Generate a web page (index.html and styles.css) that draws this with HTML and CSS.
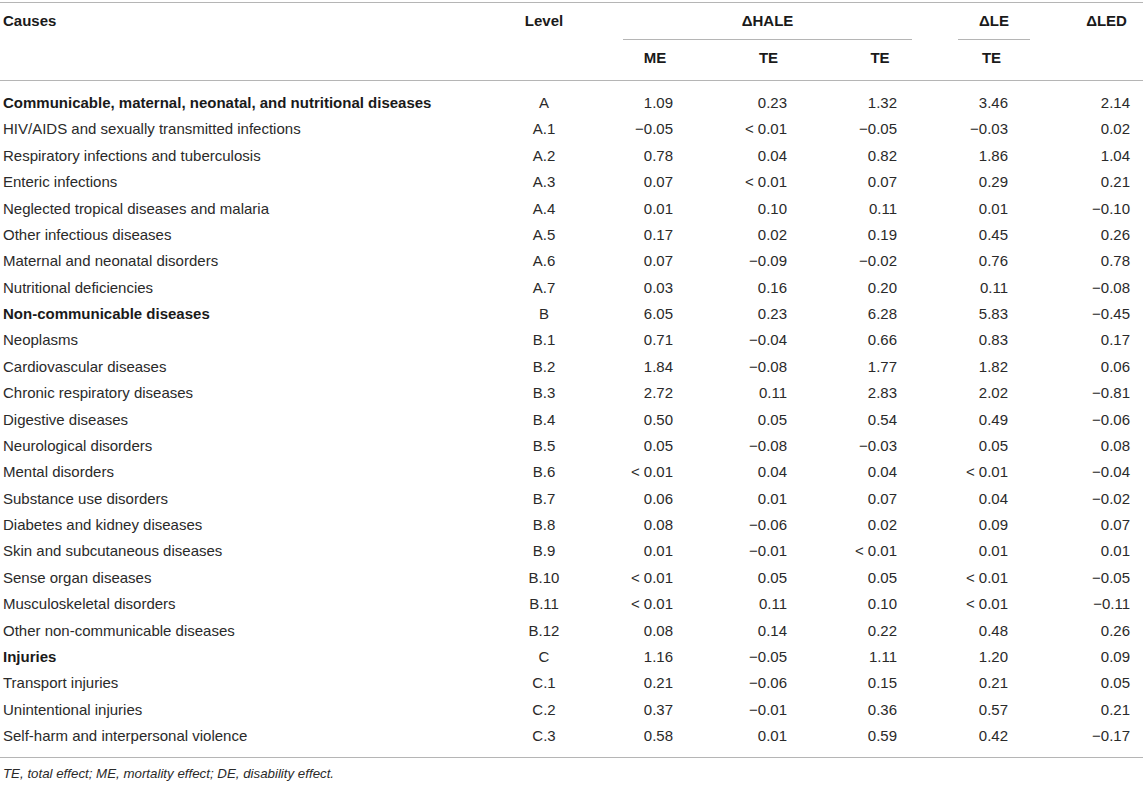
FILE: index.html
```html
<!DOCTYPE html>
<html lang="en">
<head>
<meta charset="utf-8">
<title>Table</title>
<link rel="stylesheet" href="styles.css">
</head>
<body>
<table class="data">
  <colgroup>
    <col class="c-cause"><col class="c-level"><col class="c-me"><col class="c-te2"><col class="c-te3"><col class="c-le"><col class="c-led">
  </colgroup>
  <thead>
    <tr class="h1">
      <th rowspan="2" class="th-cause">Causes</th>
      <th rowspan="2" class="th-level">Level</th>
      <th colspan="3" class="th-group"><div class="grp grp-hale">&Delta;HALE</div></th>
      <th class="th-group"><div class="grp grp-le">&Delta;LE</div></th>
      <th rowspan="2" class="th-led">&Delta;LED</th>
    </tr>
    <tr class="h2">
      <th class="th-sub">ME</th>
      <th class="th-sub">TE</th>
      <th class="th-sub">TE</th>
      <th class="th-sub">TE</th>
    </tr>
  </thead>
  <tbody>
    <tr class="cat"><td>Communicable, maternal, neonatal, and nutritional diseases</td><td>A</td><td>1.09</td><td>0.23</td><td>1.32</td><td>3.46</td><td>2.14</td></tr>
    <tr><td>HIV/AIDS and sexually transmitted infections</td><td>A.1</td><td>&minus;0.05</td><td>&lt; 0.01</td><td>&minus;0.05</td><td>&minus;0.03</td><td>0.02</td></tr>
    <tr><td>Respiratory infections and tuberculosis</td><td>A.2</td><td>0.78</td><td>0.04</td><td>0.82</td><td>1.86</td><td>1.04</td></tr>
    <tr><td>Enteric infections</td><td>A.3</td><td>0.07</td><td>&lt; 0.01</td><td>0.07</td><td>0.29</td><td>0.21</td></tr>
    <tr><td>Neglected tropical diseases and malaria</td><td>A.4</td><td>0.01</td><td>0.10</td><td>0.11</td><td>0.01</td><td>&minus;0.10</td></tr>
    <tr><td>Other infectious diseases</td><td>A.5</td><td>0.17</td><td>0.02</td><td>0.19</td><td>0.45</td><td>0.26</td></tr>
    <tr><td>Maternal and neonatal disorders</td><td>A.6</td><td>0.07</td><td>&minus;0.09</td><td>&minus;0.02</td><td>0.76</td><td>0.78</td></tr>
    <tr><td>Nutritional deficiencies</td><td>A.7</td><td>0.03</td><td>0.16</td><td>0.20</td><td>0.11</td><td>&minus;0.08</td></tr>
    <tr class="cat"><td>Non-communicable diseases</td><td>B</td><td>6.05</td><td>0.23</td><td>6.28</td><td>5.83</td><td>&minus;0.45</td></tr>
    <tr><td>Neoplasms</td><td>B.1</td><td>0.71</td><td>&minus;0.04</td><td>0.66</td><td>0.83</td><td>0.17</td></tr>
    <tr><td>Cardiovascular diseases</td><td>B.2</td><td>1.84</td><td>&minus;0.08</td><td>1.77</td><td>1.82</td><td>0.06</td></tr>
    <tr><td>Chronic respiratory diseases</td><td>B.3</td><td>2.72</td><td>0.11</td><td>2.83</td><td>2.02</td><td>&minus;0.81</td></tr>
    <tr><td>Digestive diseases</td><td>B.4</td><td>0.50</td><td>0.05</td><td>0.54</td><td>0.49</td><td>&minus;0.06</td></tr>
    <tr><td>Neurological disorders</td><td>B.5</td><td>0.05</td><td>&minus;0.08</td><td>&minus;0.03</td><td>0.05</td><td>0.08</td></tr>
    <tr><td>Mental disorders</td><td>B.6</td><td>&lt; 0.01</td><td>0.04</td><td>0.04</td><td>&lt; 0.01</td><td>&minus;0.04</td></tr>
    <tr><td>Substance use disorders</td><td>B.7</td><td>0.06</td><td>0.01</td><td>0.07</td><td>0.04</td><td>&minus;0.02</td></tr>
    <tr><td>Diabetes and kidney diseases</td><td>B.8</td><td>0.08</td><td>&minus;0.06</td><td>0.02</td><td>0.09</td><td>0.07</td></tr>
    <tr><td>Skin and subcutaneous diseases</td><td>B.9</td><td>0.01</td><td>&minus;0.01</td><td>&lt; 0.01</td><td>0.01</td><td>0.01</td></tr>
    <tr><td>Sense organ diseases</td><td>B.10</td><td>&lt; 0.01</td><td>0.05</td><td>0.05</td><td>&lt; 0.01</td><td>&minus;0.05</td></tr>
    <tr><td>Musculoskeletal disorders</td><td>B.11</td><td>&lt; 0.01</td><td>0.11</td><td>0.10</td><td>&lt; 0.01</td><td>&minus;0.11</td></tr>
    <tr><td>Other non-communicable diseases</td><td>B.12</td><td>0.08</td><td>0.14</td><td>0.22</td><td>0.48</td><td>0.26</td></tr>
    <tr class="cat"><td>Injuries</td><td>C</td><td>1.16</td><td>&minus;0.05</td><td>1.11</td><td>1.20</td><td>0.09</td></tr>
    <tr><td>Transport injuries</td><td>C.1</td><td>0.21</td><td>&minus;0.06</td><td>0.15</td><td>0.21</td><td>0.05</td></tr>
    <tr><td>Unintentional injuries</td><td>C.2</td><td>0.37</td><td>&minus;0.01</td><td>0.36</td><td>0.57</td><td>0.21</td></tr>
    <tr><td>Self-harm and interpersonal violence</td><td>C.3</td><td>0.58</td><td>0.01</td><td>0.59</td><td>0.42</td><td>&minus;0.17</td></tr>
  </tbody>
</table>
<p class="note">TE, total effect; ME, mortality effect; DE, disability effect.</p>
</body>
</html>
```
FILE: styles.css
```css
html, body {
  margin: 0;
  padding: 0;
  background: #ffffff;
}
body {
  font-family: "Liberation Sans", Arial, sans-serif;
  color: #2a2a2a;
  font-size: 15px;
}
.data {
  margin-top: 2px;
  width: 1143px;
  table-layout: fixed;
  border-collapse: collapse;
  border-top: 1px solid #b5b5b5;
  border-bottom: 1px solid #b5b5b5;
}
.c-cause { width: 490px; }
.c-level { width: 108px; }
.c-me { width: 114px; }
.c-te2 { width: 113px; }
.c-te3 { width: 110px; }
.c-le { width: 113px; }
.c-led { width: 95px; }

.data th {
  font-weight: bold;
  line-height: 18px;
  vertical-align: top;
  padding: 9px 0 0 0;
  color: #1a1a1a;
}
.data .th-cause { text-align: left; padding-left: 3px; }
.data .th-level { text-align: center; }
.data .th-led { text-align: center; padding-left: 22px; }
.data .th-group { padding: 0; }
.grp {
  padding: 9px 0 9px 0;
  border-bottom: 1px solid #b5b5b5;
  text-align: center;
}
.grp-hale { margin: 0 23px 0 25px; }
.grp-le { margin: 0 18px 0 23px; }
.h2 { border-bottom: 1px solid #b5b5b5; }
.data .th-sub {
  text-align: center;
  padding: 9px 0 13px 0;
}

.data td {
  line-height: 18px;
  padding: 4.2px 0;
  text-align: right;
  white-space: nowrap;
}
.data td:nth-child(1) { text-align: left; padding-left: 3px; }
.data td:nth-child(2) { text-align: center; }
.data td:nth-child(3) { padding-right: 39px; }
.data td:nth-child(4) { padding-right: 38px; }
.data td:nth-child(5) { padding-right: 38px; }
.data td:nth-child(6) { padding-right: 40px; }
.data td:nth-child(7) { padding-right: 13px; }
.cat td:first-child { font-weight: bold; color: #1a1a1a; }
tbody tr:first-child td { padding-top: 13px; }
tbody tr:last-child td { padding-bottom: 12.2px; }

.note {
  margin: 8px 0 0 3px;
  font-size: 13.3px;
  line-height: 16px;
  font-style: italic;
  color: #2a2a2a;
}
```
